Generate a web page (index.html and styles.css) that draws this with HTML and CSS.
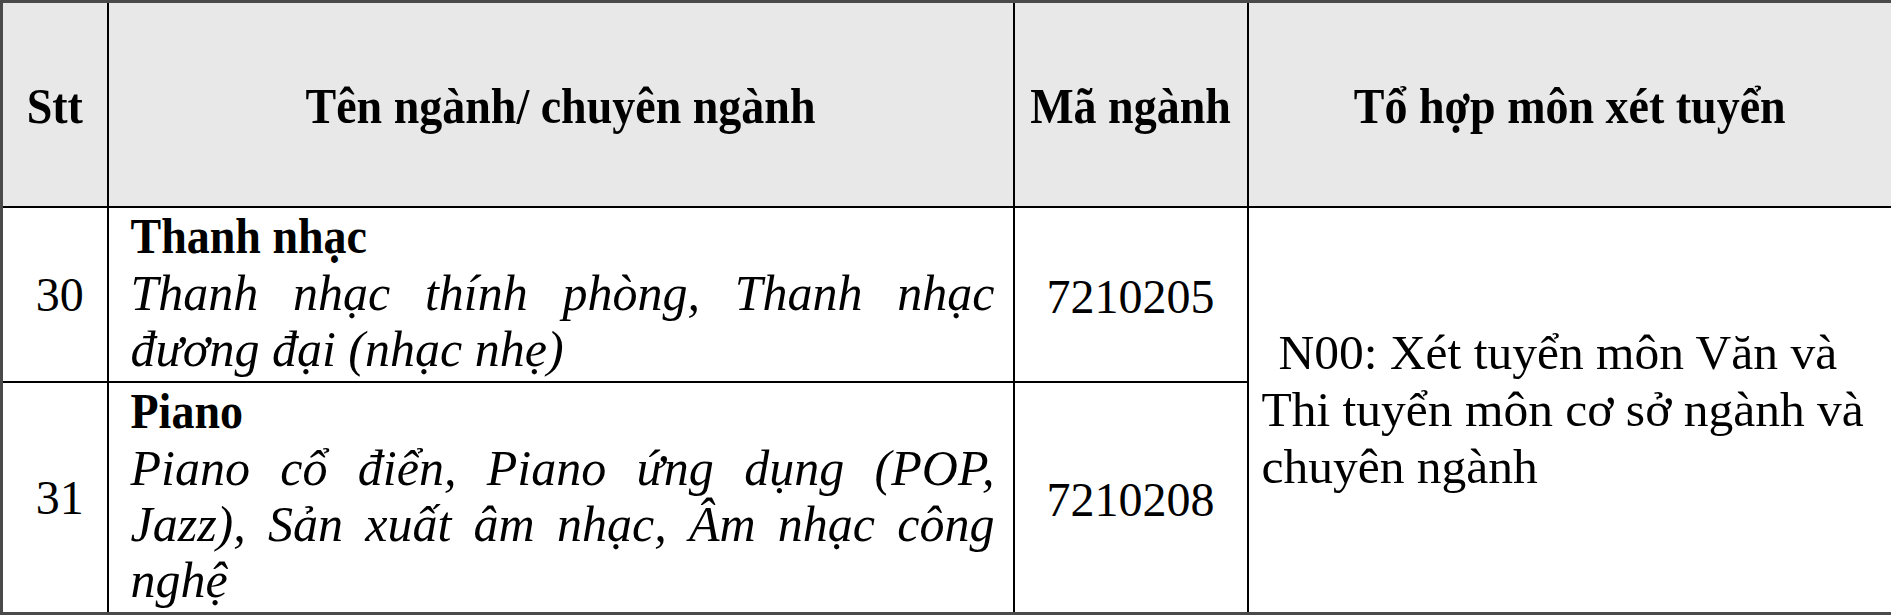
FILE: index.html
```html
<!DOCTYPE html>
<html lang="vi">
<head>
<meta charset="utf-8">
<title>Tổ hợp môn xét tuyển</title>
<link rel="stylesheet" href="styles.css">
</head>
<body>
<table class="grid">
  <colgroup>
    <col class="c-stt">
    <col class="c-name">
    <col class="c-code">
    <col class="c-combo">
  </colgroup>
  <thead>
    <tr class="head-row">
      <th><span class="hd">Stt</span></th>
      <th><span class="hd">Tên ngành/ chuyên ngành</span></th>
      <th><span class="hd">Mã ngành</span></th>
      <th><span class="hd">Tổ hợp môn xét tuyển</span></th>
    </tr>
  </thead>
  <tbody>
    <tr class="row-a">
      <td class="num">30</td>
      <td class="name">
        <div class="title">Thanh nhạc</div>
        <div class="sub">
          <span class="jline">Thanh nhạc thính phòng, Thanh nhạc</span>
          <span class="line">đương đại (nhạc nhẹ)</span>
        </div>
      </td>
      <td class="code">7210205</td>
      <td class="combo" rowspan="2">
        <div class="combo-text"><span class="first">N00: Xét tuyển môn Văn và</span><br>Thi tuyển môn cơ sở ngành và<br>chuyên ngành</div>
      </td>
    </tr>
    <tr class="row-b">
      <td class="num">31</td>
      <td class="name">
        <div class="title">Piano</div>
        <div class="sub">
          <span class="jline">Piano cổ điển, Piano ứng dụng (POP,</span>
          <span class="jline">Jazz), Sản xuất âm nhạc, Âm nhạc công</span>
          <span class="line">nghệ</span>
        </div>
      </td>
      <td class="code">7210208</td>
    </tr>
  </tbody>
</table>
</body>
</html>
```
FILE: styles.css
```css
html, body {
  margin: 0;
  padding: 0;
  background: #ffffff;
}

body {
  font-family: "Liberation Serif", "Times New Roman", serif;
  color: #000000;
}

.grid {
  width: 1891px;
  border-collapse: collapse;
  table-layout: fixed;
  border: 3px solid #4a4a4a;
}

.c-stt { width: 106px; }
.c-name { width: 906px; }
.c-code { width: 234px; }
.c-combo { width: 645px; }

.grid th,
.grid td {
  border: 2px solid #000000;
  padding: 0;
}

.head-row {
  height: 205px;
}

.grid th {
  background: #e8e8e8;
  font-size: 46px;
  font-weight: bold;
  text-align: center;
  vertical-align: middle;
  padding-top: 3px;
  white-space: nowrap;
}

.hd {
  display: inline-block;
  transform: scaleY(1.1);
}

.row-a { height: 175px; }
.row-b { height: 232px; }

.num {
  font-size: 48px;
  text-align: center;
  vertical-align: middle;
  padding-left: 10px !important;
}

.name {
  vertical-align: top;
  padding: 1px 18px 0 22px !important;
}

.title {
  font-size: 46px;
  font-weight: bold;
  line-height: 56px;
  transform: scaleY(1.08);
  transform-origin: left center;
}

.sub {
  font-size: 50px;
  font-style: italic;
  line-height: 56px;
}

.jline,
.line {
  display: block;
  white-space: nowrap;
}

.jline {
  white-space: normal;
  text-align: justify;
  text-align-last: justify;
}

.code {
  font-size: 48px;
  text-align: center;
  vertical-align: middle;
  padding-top: 4px !important;
}

.combo {
  vertical-align: middle;
  padding-left: 13px !important;
}

.combo-text {
  font-size: 49.5px;
  line-height: 57px;
  white-space: nowrap;
}

.first {
  padding-left: 17px;
}
```
